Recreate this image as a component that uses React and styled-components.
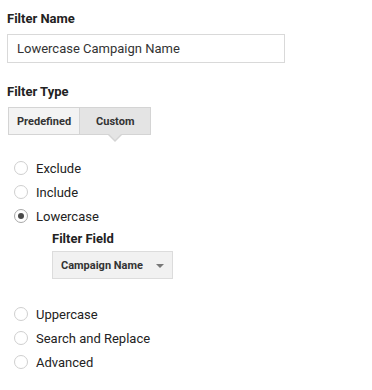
import React, { useState } from "react";
import styled, { createGlobalStyle } from "styled-components";

const GlobalStyle = createGlobalStyle`
  body {
    margin: 0;
    background: #fff;
    font-family: Roboto, "Liberation Sans", Arial, sans-serif;
    color: #222;
  }
`;

const Page = styled.div`
  padding: 11px 7px 0;
  display: flex;
  flex-direction: column;
`;

const Label = styled.div`
  font-size: 13px;
  font-weight: 700;
  line-height: 16px;
  color: #222;
  margin-bottom: ${(p) => p.gap || 7}px;
`;

const TextInput = styled.input`
  box-sizing: border-box;
  width: 278px;
  height: 29px;
  padding: 0 9px;
  border: 1px solid #d9d9d9;
  font-family: inherit;
  font-size: 13px;
  color: #333;
  outline: none;
  margin-bottom: 21px;
`;

const Group = styled.div`
  display: flex;
  align-self: flex-start;
  margin-left: 1px;
  margin-bottom: 21px;
`;

const GroupButton = styled.div`
  position: relative;
  height: 28px;
  box-sizing: border-box;
  padding: 0 ${(p) => p.pad}px;
  display: flex;
  align-items: center;
  font-size: 11px;
  font-weight: 700;
  color: #333;
  border: 1px solid #d4d4d4;
  background: ${(p) => (p.active ? "#e4e4e4" : "#f3f3f3")};
  & + & {
    border-left: none;
  }
  ${(p) =>
    p.active &&
    `
    &::before, &::after {
      content: "";
      position: absolute;
      left: 50%;
      margin-left: -7px;
      border-left: 7px solid transparent;
      border-right: 7px solid transparent;
    }
    &::before {
      bottom: -8px;
      border-top: 7px solid #d4d4d4;
    }
    &::after {
      bottom: -6px;
      border-top: 6px solid #e4e4e4;
      margin-left: -6px;
      border-left-width: 6px;
      border-right-width: 6px;
    }
  `}
`;

const RadioRow = styled.label`
  display: flex;
  align-items: center;
  height: 24px;
  padding-left: 7px;
  font-size: 13px;
  color: #222;
  cursor: pointer;
`;

const RadioCircle = styled.span`
  width: 14px;
  height: 14px;
  box-sizing: border-box;
  border-radius: 50%;
  border: 1px solid ${(p) => (p.checked ? "#a8a8a8" : "#cfcfcf")};
  background: #fff;
  margin-right: 8px;
  display: flex;
  align-items: center;
  justify-content: center;
  &::after {
    content: "";
    width: 6px;
    height: 6px;
    border-radius: 50%;
    background: ${(p) => (p.checked ? "#4a4a4a" : "transparent")};
  }
`;

const SubField = styled.div`
  padding: 3px 0 0 45px;
  margin-bottom: 23px;
  display: flex;
  flex-direction: column;
  align-items: flex-start;
`;

const Select = styled.div`
  box-sizing: border-box;
  width: 121px;
  height: 28px;
  padding: 0 8px 0 8px;
  display: flex;
  align-items: center;
  justify-content: space-between;
  background: #f1f1f1;
  border: 1px solid #dcdcdc;
  font-size: 11px;
  font-weight: 700;
  color: #333;
`;

const Caret = styled.span`
  border-left: 4px solid transparent;
  border-right: 4px solid transparent;
  border-top: 4px solid #777;
  margin-top: 2px;
`;

const Radio = ({ label, checked, onClick }) => (
  <RadioRow onClick={onClick}>
    <RadioCircle checked={checked} />
    {label}
  </RadioRow>
);

export default function App() {
  const [type, setType] = useState("Lowercase");
  const top = ["Exclude", "Include", "Lowercase"];
  const rest = ["Uppercase", "Search and Replace", "Advanced"];
  return (
    <Page>
      <GlobalStyle />
      <Label>Filter Name</Label>
      <TextInput defaultValue="Lowercase Campaign Name" />
      <Label gap={7}>Filter Type</Label>
      <Group>
        <GroupButton pad={8}>Predefined</GroupButton>
        <GroupButton pad={16} active>
          Custom
        </GroupButton>
      </Group>
      {top.map((t) => (
        <Radio key={t} label={t} checked={type === t} onClick={() => setType(t)} />
      ))}
      <SubField>
        <Label gap={4}>Filter Field</Label>
        <Select>
          Campaign Name
          <Caret />
        </Select>
      </SubField>
      {rest.map((t) => (
        <Radio key={t} label={t} checked={type === t} onClick={() => setType(t)} />
      ))}
    </Page>
  );
}
